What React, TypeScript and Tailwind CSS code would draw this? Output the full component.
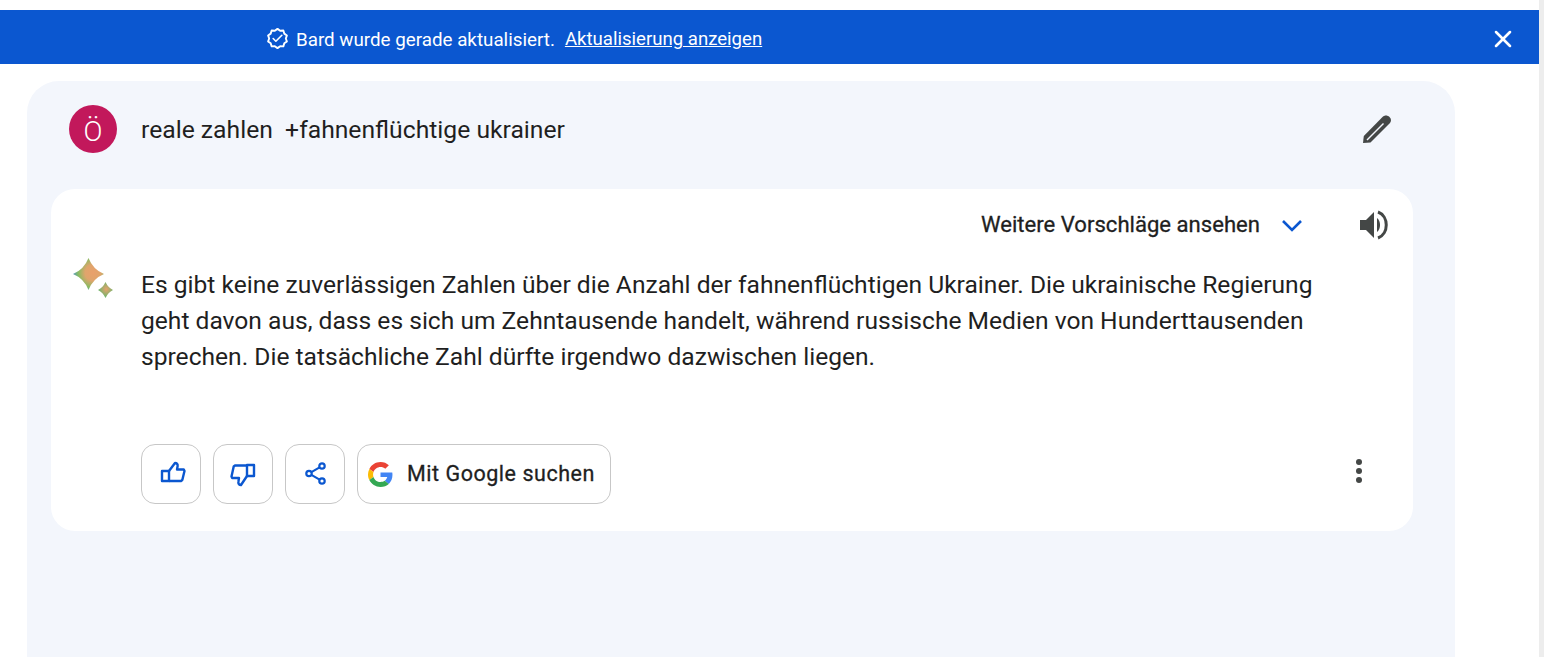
import { X, Check } from "lucide-react";

function GeminiSpark() {
  return (
    <svg width="44" height="44" viewBox="0 0 44 44" className="ml-[3px] shrink-0">
      <defs>
        <radialGradient id="spark" cx="0.64" cy="0.46" r="0.66">
          <stop offset="0" stopColor="#e9a06c" />
          <stop offset="0.38" stopColor="#dfa56c" />
          <stop offset="0.72" stopColor="#86bb62" />
          <stop offset="1" stopColor="#4f93c8" />
        </radialGradient>
        <radialGradient id="spark2" cx="0.55" cy="0.45" r="0.5">
          <stop offset="0" stopColor="#e7a26c" />
          <stop offset="1" stopColor="#6fb56c" />
        </radialGradient>
      </defs>
      <path d="M16.500 1 Q21 12.500 32 17 Q21 21.500 16.500 33 Q12 21.500 1 17 Q12 12.500 16.500 1Z" fill="url(#spark)" />
      <path d="M33.500 25 Q36 30.500 41 33 Q36 35.500 33.500 41 Q31 35.500 26 33 Q31 30.500 33.500 25Z" fill="url(#spark2)" />
    </svg>
  );
}

function GoogleG() {
  return (
    <svg width="25" height="25" viewBox="0 0 48 48">
      <path fill="#EA4335" d="M24 9.500c3.540 0 6.710 1.220 9.210 3.600l6.850-6.850C35.900 2.380 30.470 0 24 0 14.620 0 6.510 5.380 2.560 13.220l7.980 6.190C12.430 13.720 17.740 9.500 24 9.500z" />
      <path fill="#4285F4" d="M46.980 24.550c0-1.570-.15-3.090-.38-4.550H24v9.020h12.940c-.58 2.960-2.260 5.480-4.780 7.180l7.730 6c4.510-4.180 7.090-10.360 7.090-17.650z" />
      <path fill="#FBBC05" d="M10.530 28.590c-.48-1.450-.76-2.990-.76-4.590s.27-3.140.76-4.590l-7.980-6.190C.92 16.460 0 20.120 0 24c0 3.880.92 7.540 2.560 10.780l7.970-6.190z" />
      <path fill="#34A853" d="M24 48c6.480 0 11.930-2.130 15.890-5.810l-7.730-6c-2.150 1.450-4.920 2.300-8.160 2.300-6.260 0-11.570-4.220-13.470-9.910l-7.980 6.190C6.510 42.620 14.620 48 24 48z" />
    </svg>
  );
}

function VerifiedIcon() {
  return (
    <span className="relative mt-[-3px] flex h-[23px] w-[23px] items-center justify-center">
      <svg width="23" height="23" viewBox="0 0 24 24" fill="none" stroke="white" strokeWidth="2" strokeLinejoin="round">
        <path d="M12 2l2.800 1.900 3.300-.2 1 3.200 2.700 1.900-1.100 3.200 1.100 3.100-2.700 1.900-1 3.200-3.300-.1L12 22l-2.800-1.900-3.300.1-1-3.200-2.700-1.900 1.100-3.100-1.100-3.200 2.700-1.900 1-3.200 3.300.2z" />
      </svg>
      <Check className="absolute h-[13px] w-[13px] text-white" strokeWidth={3} />
    </span>
  );
}

function IconButton({ children }: { children: React.ReactNode }) {
  return (
    <button className="flex h-[60px] w-[60px] items-center justify-center rounded-[14px] border border-[#c7c7c7]">
      {children}
    </button>
  );
}

export default function App() {
  return (
    <div className="flex h-[657px] overflow-hidden bg-white font-['Roboto',sans-serif] text-[#1f1f1f]">
      <div className="flex min-w-0 flex-1 flex-col pt-2.5">
        <div className="flex h-[54px] shrink-0 items-center bg-[#0b57d0] pl-[266px] pr-[22px] pt-[6px] text-white">
          <VerifiedIcon />
          <span className="ml-[7px] text-[18.8px]">Bard wurde gerade aktualisiert.</span>
          <a className="ml-[10px] text-[18.6px] underline">Aktualisierung anzeigen</a>
          <X className="ml-auto mt-[-6px] h-7 w-7 translate-y-[2px]" strokeWidth={2.2} />
        </div>

        <div className="ml-[27px] mt-[17px] w-[1428px] flex-1 rounded-t-[32px] bg-[#f3f6fc] pl-6 pr-[42px]">
          <div className="flex h-[108px] items-center pb-[12px] pl-[18px] pr-[20px]">
            <div className="flex h-12 w-12 items-center justify-center rounded-full bg-[#c2185b] pt-[6px] text-[28px] font-light text-white">
              Ö
            </div>
            <p className="ml-6 mt-[2px] whitespace-pre text-[24.7px]">reale zahlen  +fahnenflüchtige ukrainer</p>
            <svg className="ml-auto" width="32" height="32" viewBox="0 0 32 32" fill="none">
              <path d="M2 30 L2.800 23 L21.500 4 C23.500 2 26.500 2 28.500 4 C30.500 6 30.500 8.500 28.500 10.500 L9.500 29.500 Z" fill="#444746" />
              <path d="M5.500 26.500 L22 10 L23 11 L6.500 27.500 Z" fill="#f3f6fc" />
            </svg>
          </div>

          <div className="h-[342px] rounded-[24px] bg-white pl-[18px]">
            <div className="flex h-[72px] items-center justify-end pr-[23px]">
              <span className="text-[22.100px] [-webkit-text-stroke:0.3px]">Weitere Vorschläge ansehen</span>
              <svg className="ml-[20px]" width="24" height="24" viewBox="0 0 24 24" fill="none" stroke="#0b57d0" strokeWidth="2.600">
                <path d="M3 8 L12 17 L21 8" />
              </svg>
              <svg className="ml-[54px]" width="32" height="32" viewBox="0 0 32 32" fill="#444746">
                <path d="M2 11h6l8-8v26l-8-8H2z" />
                <path d="M19 9 C23 12 23 20 19 23z" />
                <path d="M20 3 C31 7 31 25 20 29" fill="none" stroke="#444746" strokeWidth="3" />
              </svg>
            </div>

            <div className="mt-[-4px] flex">
              <div className="w-[72px] shrink-0"><GeminiSpark /></div>
              <p className="mt-[10px] w-[1190px] text-[24.6px] leading-[36px]">
                Es gibt keine zuverlässigen Zahlen über die Anzahl der fahnenflüchtigen Ukrainer. Die ukrainische Regierung
                geht davon aus, dass es sich um Zehntausende handelt, während russische Medien von Hunderttausenden
                sprechen. Die tatsächliche Zahl dürfte irgendwo dazwischen liegen.
              </p>
            </div>

            <div className="mt-[69px] flex items-start gap-3 pl-[72px]">
              <IconButton>
                <svg width="28" height="28" viewBox="0 0 28 28" fill="none" stroke="#0b57d0" strokeWidth="2.400" strokeLinejoin="round" className="ml-[2px] mt-[-1px]">
                  <path d="M4 11h7v10H4z" />
                  <path d="M11 11l6-8c1.800 0 3 1.200 2.600 3.200L19 9.500h6.800l.7 1.500-2.200 9-1.300 1H11" />
                </svg>
              </IconButton>
              <IconButton>
                <svg width="28" height="28" viewBox="0 0 28 28" fill="none" stroke="#0b57d0" strokeWidth="2.400" strokeLinejoin="round">
                  <path d="M18 16V5h7v11z" />
                  <path d="M18 16l-6 9c-1.800 0-3-1.200-2.600-3.200l.6-3.800H3.200l-.7-1.500 2.200-10 1.300-1H18" />
                </svg>
              </IconButton>
              <IconButton>
                <svg width="26" height="26" viewBox="0 0 26 26" fill="none" stroke="#0b57d0" strokeWidth="2.200">
                  <circle cx="20" cy="5" r="2.700" />
                  <circle cx="7" cy="12.500" r="2.700" />
                  <circle cx="20" cy="20" r="2.700" />
                  <path d="M9.400 11.100L17.600 6.400M9.400 13.900L17.600 18.600" />
                </svg>
              </IconButton>
              <button className="flex h-[60px] w-[254px] items-center rounded-[14px] border border-[#c7c7c7] pl-[10px]">
                <GoogleG />
                <span className="ml-[14px] text-[21.500px] tracking-[0.53px] [-webkit-text-stroke:0.3px]">Mit Google suchen</span>
              </button>
              <svg className="ml-auto mr-[50px] mt-[14px]" width="8" height="26" viewBox="0 0 8 26" fill="#444746">
                <circle cx="4" cy="4" r="3" />
                <circle cx="4" cy="13" r="3" />
                <circle cx="4" cy="22" r="3" />
              </svg>
            </div>
          </div>
        </div>
      </div>
      <div className="w-[7px] shrink-0 border-r-2 border-white bg-[#ededed]" />
    </div>
  );
}
